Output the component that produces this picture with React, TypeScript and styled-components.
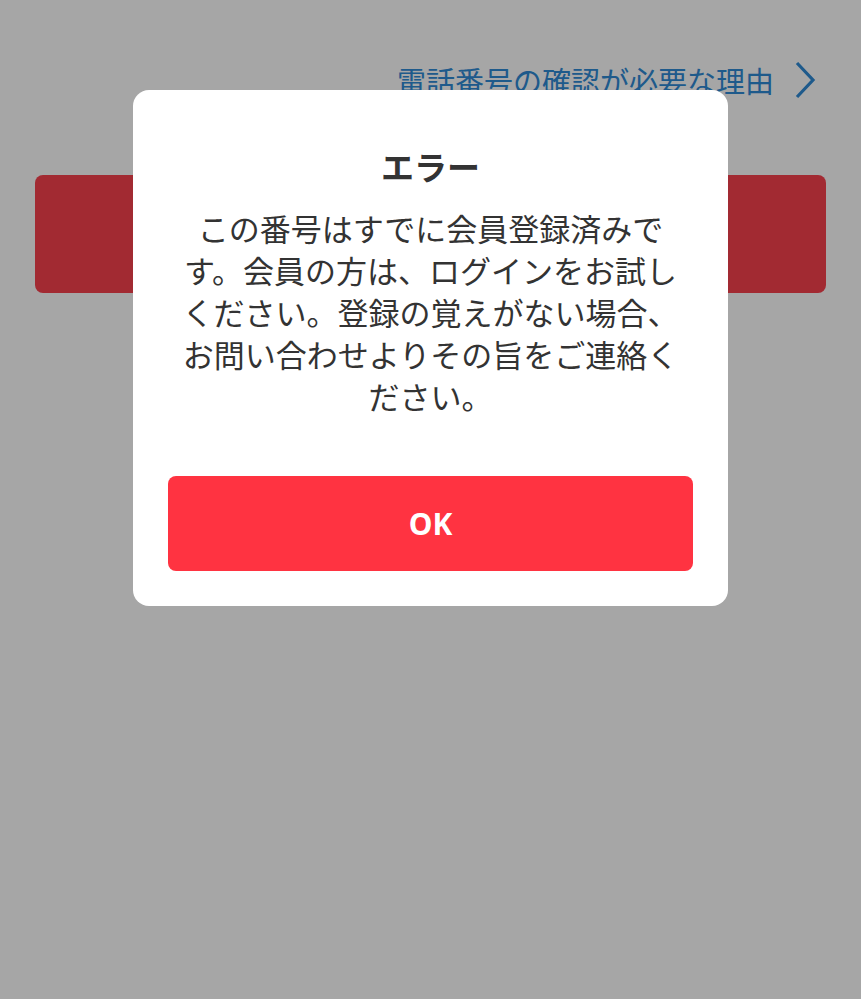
import React from 'react'
import styled, { createGlobalStyle } from 'styled-components'

const GlobalStyle = createGlobalStyle`
  html, body {
    margin: 0;
    padding: 0;
    background: #ffffff;
    font-family: "Noto Sans CJK JP", "Noto Sans", sans-serif;
  }
`

const Page = styled.div`
  width: 861px;
  height: 999px;
  padding: 0 35px;
  box-sizing: border-box;
  display: flex;
  flex-direction: column;
`

const HelpLink = styled.a`
  align-self: flex-end;
  margin-top: 58px;
  margin-right: 10px;
  display: flex;
  align-items: center;
  gap: 20px;
  color: #2f8ad6;
  font-size: 29px;
  line-height: 44px;
  text-decoration: none;
`

const SubmitButton = styled.div`
  margin-top: 73px;
  height: 118px;
  border-radius: 8px;
  background: #f9414e;
`

const Overlay = styled.div`
  position: fixed;
  inset: 0;
  background: rgba(0, 0, 0, 0.35);
  display: flex;
  justify-content: center;
  align-items: flex-start;
  padding-top: 90px;
`

const Dialog = styled.div`
  width: 595px;
  box-sizing: border-box;
  background: #ffffff;
  border-radius: 16px;
  padding: 53px 35px 35px;
  display: flex;
  flex-direction: column;
  align-items: center;
  color: #333333;
`

const Title = styled.h2`
  margin: 0;
  font-size: 33px;
  font-weight: 700;
  line-height: 46px;
`

const Message = styled.p`
  margin: 18px 0 0;
  padding: 0 10px;
  font-size: 31px;
  line-height: 42px;
  text-align: center;
`

const OkButton = styled.button`
  margin-top: 59px;
  width: 100%;
  height: 95px;
  border: none;
  border-radius: 8px;
  background: #ff3341;
  color: #ffffff;
  font-family: "Noto Sans", sans-serif;
  font-size: 30px;
  font-weight: 700;
`

export default function App() {
  return (
    <>
      <GlobalStyle />
      <Page>
        <HelpLink href="#">
          電話番号の確認が必要な理由
          <svg width="22" height="38" viewBox="0 0 22 38">
            <polyline points="3,2 19,19 3,36" fill="none" stroke="currentColor" strokeWidth="3.2" />
          </svg>
        </HelpLink>
        <SubmitButton />
      </Page>
      <Overlay>
        <Dialog>
          <Title>エラー</Title>
          <Message>
            この番号はすでに会員登録済みです。会員の方は、ログインをお試しください。登録の覚えがない場合、お問い合わせよりその旨をご連絡ください。
          </Message>
          <OkButton>OK</OkButton>
        </Dialog>
      </Overlay>
    </>
  )
}
